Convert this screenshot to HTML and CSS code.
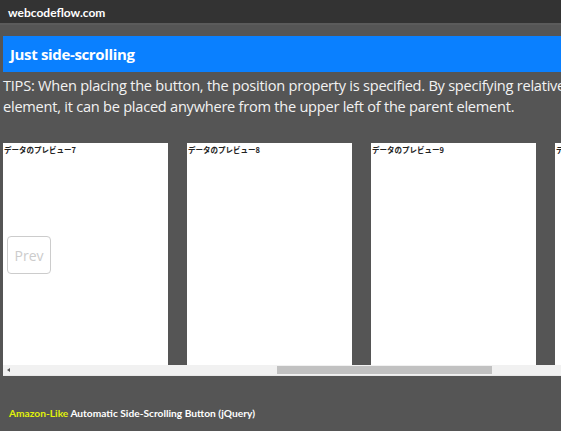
FILE: index.html
```html
<!DOCTYPE html>
<html lang="ja">
<head>
<meta charset="utf-8">
<title>Just side-scrolling</title>
<link rel="stylesheet" href="styles.css">
</head>
<body>
<header class="site-bar">webcodeflow.com</header>
<main class="demo">
  <h1 class="demo-title">Just side-scrolling</h1>
  <p class="tips">TIPS: When placing the button, the position property is specified. By specifying relative to the parent element, it can be placed anywhere from the upper left of the parent element.</p>
  <div class="scroller">
    <div class="track">
      <div class="card">データのプレビュー7</div>
      <div class="card">データのプレビュー8</div>
      <div class="card">データのプレビュー9</div>
      <div class="card">データのプレビュー10</div>
    </div>
    <button class="prev">Prev</button>
    <div class="hbar">
      <span class="arrow"></span>
      <span class="thumb"></span>
    </div>
  </div>
</main>
<footer class="caption"><span class="hl">Amazon-Like</span> Automatic Side-Scrolling Button (jQuery)</footer>
</body>
</html>
```
FILE: styles.css
```css
html, body {
  margin: 0;
  padding: 0;
  background: #555555;
  height: 100%;
  overflow: hidden;
}
body {
  font-family: "Open Sans", "Noto Sans", sans-serif;
}
.site-bar {
  height: 25px;
  background: #333333;
  color: #ffffff;
  font-family: "Lato", "DejaVu Sans", sans-serif;
  font-weight: 700;
  font-size: 12px;
  line-height: 25px;
  padding-left: 8px;
  border-bottom: 2px solid #5b5b5b;
  box-sizing: border-box;
}
.demo {
  padding: 11px 0 0 3px;
}
.demo-title {
  margin: 0;
  height: 36px;
  background: #0a80ff;
  color: #ffffff;
  font-size: 15px;
  font-weight: 700;
  letter-spacing: -0.35px;
  line-height: 36px;
  padding-left: 7px;
}
.tips {
  margin: 0;
  padding-top: 3px;
  color: #f2f2f2;
  font-size: 14.6px;
  letter-spacing: -0.25px;
  line-height: 21px;
  width: 660px;
}
.scroller {
  position: relative;
  margin-top: 26px;
  overflow: hidden;
}
.track {
  display: flex;
  gap: 19px;
  height: 222px;
}
.card {
  flex: 0 0 165px;
  background: #ffffff;
  color: #222222;
  font-family: "Noto Sans CJK JP", sans-serif;
  font-weight: 700;
  font-size: 7.5px;
  line-height: 10px;
  padding: 2px 0 0 1px;
  box-sizing: border-box;
}
.prev {
  position: absolute;
  left: 4px;
  top: 93px;
  width: 44px;
  height: 38px;
  background: #ffffff;
  border: 1px solid #cccccc;
  border-radius: 4px;
  color: #cccccc;
  font-family: "Open Sans", sans-serif;
  font-size: 14px;
  padding: 0;
}
.hbar {
  position: relative;
  height: 10px;
  background: #f1f1f1;
  border-bottom: 1px solid #e8e8e8;
}
.arrow {
  position: absolute;
  left: 4px;
  top: 3px;
  width: 0;
  height: 0;
  border-top: 2px solid transparent;
  border-bottom: 2px solid transparent;
  border-right: 3px solid #555555;
}
.thumb {
  position: absolute;
  left: 274px;
  top: 1px;
  width: 215px;
  height: 8px;
  background: #c1c1c1;
}
.caption {
  position: absolute;
  left: 9px;
  top: 407px;
  color: #ffffff;
  font-family: "Lato", "DejaVu Sans", sans-serif;
  font-weight: 700;
  font-size: 10.2px;
}
.hl {
  color: #e1f20a;
}
```
